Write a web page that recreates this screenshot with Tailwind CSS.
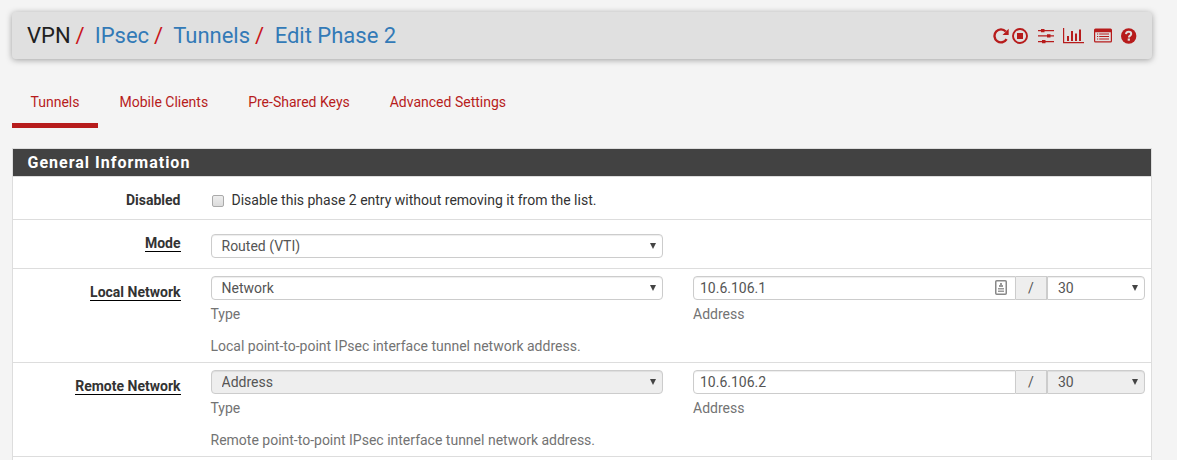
<!DOCTYPE html>
<html lang="en">
<head>
    <meta charset="UTF-8">
    <meta name="viewport" content="width=device-width, initial-scale=1.0">
    <title>VPN: IPsec: Tunnels: Edit Phase 2</title>
    <script src="https://cdn.jsdelivr.net/npm/@tailwindcss/browser@4"></script>
</head>
<body class="bg-[#f4f4f4] h-screen overflow-hidden px-3 pt-3 font-['Roboto',sans-serif] text-[14px] leading-5 text-[#333]">
    <header class="flex items-center justify-between w-[1140px] h-[47px] px-[15px] bg-[#e0e0e0] rounded-sm shadow-[0_1px_6px_rgba(0,0,0,0.35)]">
        <ol class="flex text-[22px] leading-[30px] text-[#337ab7]">
            <li class="text-[#212121]">VPN</li>
            <li><span class="text-[#c9151b] pl-[5px] pr-2.5">/</span>IPsec</li>
            <li><span class="text-[#c9151b] pl-[5px] pr-2.5">/</span>Tunnels</li>
            <li><span class="text-[#c9151b] pl-[5px] pr-[10.5px]">/</span>Edit Phase 2</li>
        </ol>
        <nav class="flex items-center text-[#b71c1c]">
            <a href="#" title="Restart"><svg class="w-4 h-4 mr-[3px]" viewBox="0 0 16 16" fill="none"><path d="M12.8 3.5A6.5 6.5 0 1 0 13.6 11.2" stroke="currentColor" stroke-width="2.4"/><path d="M15.7 0.800v6.200H9.500z" fill="currentColor"/></svg></a>
            <a href="#" title="Stop"><svg class="w-4 h-4 mr-2.5" viewBox="0 0 16 16" fill="none"><circle cx="8" cy="8" r="7" stroke="currentColor" stroke-width="1.9"/><path d="M5 5h6v6H5z" fill="currentColor"/></svg></a>
            <a href="#" title="Settings"><svg class="w-4 h-4 mr-[9px]" viewBox="0 0 16 16" fill="currentColor"><path d="M0 2h16v1.300H0zM0 7.300h16v1.300H0zM0 13h16v1.300H0z"/><path d="M3 1h3.500v3.300H3zM9 6.300h3.500v3.300H9zM4 12h3.500v3.300H4z"/></svg></a>
            <a href="#" title="Monitoring"><svg class="w-[21px] h-4 mr-2.5" viewBox="0 0 21 16" fill="currentColor"><path d="M0 0h1.200v14h19.800v1.200H0zM4 8h2v5H4zM8 3h2v10H8zM12 5.500h2V13h-2zM16 1.500h2V13h-2z"/></svg></a>
            <a href="#" title="Logs"><svg class="w-[18px] h-4 mr-[9.5px]" viewBox="0 0 18 16" fill="currentColor"><path fill-rule="evenodd" d="M1.500 0.500h15A1.500 1.500 0 0 1 18 2v11a1.500 1.500 0 0 1-1.500 1.500h-15A1.500 1.500 0 0 1 0 13V2A1.500 1.500 0 0 1 1.500 0.500zM1.200 4.200v8.600a.5.5 0 0 0 .5.5h14.600a.5.5 0 0 0 .5-.5V4.200z"/><path d="M3 5.500h1.200v1H3zM5.200 5.500H15v1H5.200zM3 8h1.200v1H3zM5.200 8H15v1H5.200zM3 10.500h1.200v1H3zM5.200 10.500H15v1H5.200z"/></svg></a>
            <a href="#" title="Help"><svg class="w-4 h-4" viewBox="0 0 16 16" fill="none"><circle cx="7.700" cy="8" r="7.700" fill="currentColor"/><path d="M5 6.100C5.200 4.400 6.300 3.800 7.700 3.800c1.500 0 2.500.9 2.500 2.100 0 1.700-2.300 1.700-2.300 3.500" stroke="#e0e0e0" stroke-width="2"/><path d="M6.700 10.500h2.200v2.200H6.700z" fill="#e0e0e0"/></svg></a>
        </nav>
    </header>

    <ul class="flex mt-[19px] h-[50px] text-[#b71c1c]">
        <li class="w-[86px] pl-[18.5px] pt-[14px] border-b-5 border-[#b71c1c]">Tunnels</li>
        <li class="pl-[21.5px] pr-5 pt-[14px]">Mobile Clients</li>
        <li class="px-5 pt-[14px]">Pre-Shared Keys</li>
        <li class="px-5 pt-[14px]">Advanced Settings</li>
    </ul>

    <main class="w-[1140px] mt-5 bg-white border border-b-0 border-[#ddd]">
        <h2 class="h-[27px] pl-[14.5px] bg-[#424242] text-white text-[16px] leading-[28px] font-bold tracking-[1px]">General Information</h2>

        <div class="flex h-[43px] border-t border-[#ddd]">
            <div class="w-[167.5px] pt-[13px] text-right font-bold"><span>Disabled</span></div>
            <label class="flex items-center ml-[31.5px] pt-1">
                <input type="checkbox" class="appearance-none w-3 h-3 mt-0.5 mr-[7.5px] border border-[#aaa] rounded-xs bg-linear-to-b from-[#eee] to-[#dcdcdc]">
                <span>Disable this phase 2 entry without removing it from the list.</span>
            </label>
        </div>

        <div class="flex h-[49px] border-t border-[#ddd]">
            <div class="w-[167.5px] pt-[13px] text-right font-bold"><span class="inline-block h-[18px] border-b border-black leading-[18px]">Mode</span></div>
            <div class="relative w-[452px] ml-[30.5px] mt-[14px]">
                <select class="appearance-none block w-full h-6 px-[9.5px] border border-[#ccc] rounded bg-white text-[#555] shadow-[inset_0_1px_1px_rgba(0,0,0,0.075)]"><option>Routed (VTI)</option></select>
                <svg class="absolute right-[7px] top-[9px] w-[6px] h-[6px]" viewBox="0 0 6 6" fill="#444"><path d="M0 0h6L3 6z"/></svg>
            </div>
        </div>

        <div class="flex h-[94px] border-t border-[#ddd]">
            <div class="w-[167.5px] pt-[13px] text-right font-bold"><span class="inline-block h-[18px] border-b border-black leading-[18px]">Local Network</span></div>
            <div class="w-[452px] ml-[30.5px] mt-[7px] text-[#737373]">
                <div class="relative">
                    <select class="appearance-none block w-full h-6 px-[9.5px] border border-[#ccc] rounded bg-white text-[#555] shadow-[inset_0_1px_1px_rgba(0,0,0,0.075)]"><option>Network</option></select>
                    <svg class="absolute right-[7px] top-[9px] w-[6px] h-[6px]" viewBox="0 0 6 6" fill="#444"><path d="M0 0h6L3 6z"/></svg>
                </div>
                <p class="mt-1 -ml-[0.5px]">Type</p>
                <p class="mt-3 -ml-[0.5px]">Local point-to-point IPsec interface tunnel network address.</p>
            </div>
            <div class="w-[452px] ml-[30px] mt-[7px] text-[#737373]">
                <div class="flex">
                    <div class="relative w-[323px]">
                        <input type="text" value="10.6.106.1" class="block w-full h-6 px-1.5 border border-[#ccc] rounded-l bg-white text-[#555] shadow-[inset_0_1px_1px_rgba(0,0,0,0.075)]">
                        <svg class="absolute right-[9px] top-1 w-3 h-[15px]" viewBox="0 0 12 15" fill="#999"><rect x="0.75" y="0.75" width="10.5" height="13.5" rx="1" fill="none" stroke="#888" stroke-width="1.5"/><path d="M5 3h2v2h1v2H4V5h1zM3 8h6v1.500H3zM3 10.500h6V12H3z"/></svg>
                    </div>
                    <span class="w-[31px] h-6 border-y border-r border-[#ccc] bg-[#eee] text-[#555] text-center leading-[22px]">/</span>
                    <div class="relative w-[98px]">
                        <select class="appearance-none block w-full h-6 px-2.5 border border-[#ccc] rounded-r bg-white text-[#555] shadow-[inset_0_1px_1px_rgba(0,0,0,0.075)]"><option>30</option></select>
                        <svg class="absolute right-[7px] top-[9px] w-[6px] h-[6px]" viewBox="0 0 6 6" fill="#444"><path d="M0 0h6L3 6z"/></svg>
                    </div>
                </div>
                <p class="mt-1">Address</p>
            </div>
        </div>

        <div class="flex h-[95px] border-y border-[#ddd]">
            <div class="w-[167.5px] pt-[13px] text-right font-bold"><span class="inline-block h-[18px] border-b border-black leading-[18px]">Remote Network</span></div>
            <div class="w-[452px] ml-[30.5px] mt-[7px] text-[#737373]">
                <div class="relative">
                    <select class="appearance-none block w-full h-6 px-[9.5px] border border-[#ccc] rounded bg-[#eee] text-[#555] shadow-[inset_0_1px_1px_rgba(0,0,0,0.075)]"><option>Address</option></select>
                    <svg class="absolute right-[7px] top-[9px] w-[6px] h-[6px]" viewBox="0 0 6 6" fill="#444"><path d="M0 0h6L3 6z"/></svg>
                </div>
                <p class="mt-1 -ml-[0.5px]">Type</p>
                <p class="mt-3 -ml-[0.5px]">Remote point-to-point IPsec interface tunnel network address.</p>
            </div>
            <div class="w-[452px] ml-[30px] mt-[7px] text-[#737373]">
                <div class="flex">
                    <input type="text" value="10.6.106.2" class="block w-[323px] h-6 px-1.5 border border-[#ccc] rounded-l bg-white text-[#555] shadow-[inset_0_1px_1px_rgba(0,0,0,0.075)]">
                    <span class="w-[31px] h-6 border-y border-r border-[#ccc] bg-[#eee] text-[#555] text-center leading-[22px]">/</span>
                    <div class="relative w-[98px]">
                        <select class="appearance-none block w-full h-6 px-2.5 border border-[#ccc] rounded-r bg-[#eee] text-[#555] shadow-[inset_0_1px_1px_rgba(0,0,0,0.075)]"><option>30</option></select>
                        <svg class="absolute right-[7px] top-[9px] w-[6px] h-[6px]" viewBox="0 0 6 6" fill="#444"><path d="M0 0h6L3 6z"/></svg>
                    </div>
                </div>
                <p class="mt-1">Address</p>
            </div>
        </div>
        <div class="h-[3px]"></div>
    </main>
</body>
</html>
